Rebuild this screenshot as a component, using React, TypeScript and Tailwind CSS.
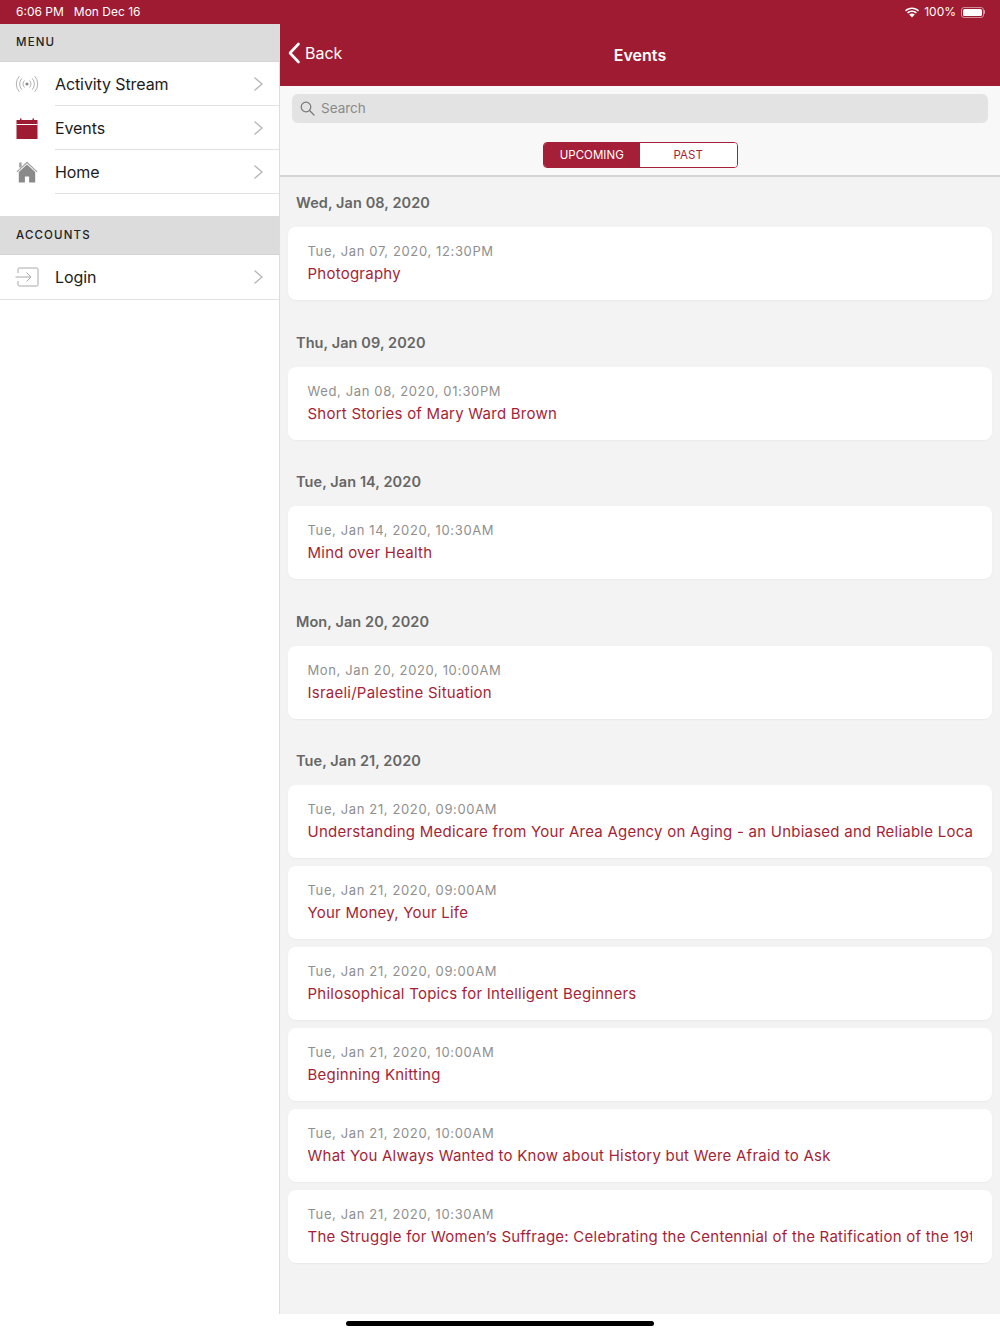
const font = "font-['Inter','Liberation_Sans',sans-serif]";

interface EventItem {
  time: string;
  title: string;
}

interface EventGroup {
  day: string;
  items: EventItem[];
}

const groups: EventGroup[] = [
  { day: 'Wed, Jan 08, 2020', items: [{ time: 'Tue, Jan 07, 2020, 12:30PM', title: 'Photography' }] },
  { day: 'Thu, Jan 09, 2020', items: [{ time: 'Wed, Jan 08, 2020, 01:30PM', title: 'Short Stories of Mary Ward Brown' }] },
  { day: 'Tue, Jan 14, 2020', items: [{ time: 'Tue, Jan 14, 2020, 10:30AM', title: 'Mind over Health' }] },
  { day: 'Mon, Jan 20, 2020', items: [{ time: 'Mon, Jan 20, 2020, 10:00AM', title: 'Israeli/Palestine Situation' }] },
  {
    day: 'Tue, Jan 21, 2020',
    items: [
      { time: 'Tue, Jan 21, 2020, 09:00AM', title: 'Understanding Medicare from Your Area Agency on Aging - an Unbiased and Reliable Local Resource' },
      { time: 'Tue, Jan 21, 2020, 09:00AM', title: 'Your Money, Your Life' },
      { time: 'Tue, Jan 21, 2020, 09:00AM', title: 'Philosophical Topics for Intelligent Beginners' },
      { time: 'Tue, Jan 21, 2020, 10:00AM', title: 'Beginning Knitting' },
      { time: 'Tue, Jan 21, 2020, 10:00AM', title: 'What You Always Wanted to Know about History but Were Afraid to Ask' },
      { time: 'Tue, Jan 21, 2020, 10:30AM', title: 'The Struggle for Women\u2019s Suffrage: Celebrating the Centennial of the Ratification of the 19th Amendment' },
    ],
  },
];

function StreamIcon() {
  return (
    <svg width="24" height="18" viewBox="0 0 24 18" fill="none" stroke="#a8a8a8" strokeWidth="0.9" strokeLinecap="round">
      <circle cx="12" cy="9" r="1.6" fill="#8c8c8c" stroke="none" />
      <path d="M9.2 5.8a4.6 4.6 0 0 0 0 6.4M14.8 5.8a4.6 4.6 0 0 1 0 6.4" />
      <path d="M6.6 3.6a8 8 0 0 0 0 10.8M17.4 3.6a8 8 0 0 1 0 10.8" />
      <path d="M4 1.5a11.4 11.4 0 0 0 0 15M20 1.5a11.4 11.4 0 0 1 0 15" />
    </svg>
  );
}

function CalendarIcon() {
  return (
    <svg width="22" height="21" viewBox="0 0 22 21">
      <rect x="0.5" y="2" width="21" height="19" fill="#9e1b32" />
      <rect x="0.5" y="6" width="21" height="1" fill="#ffffff" />
      <rect x="4" y="0.5" width="1.5" height="3.5" fill="#9e1b32" />
      <rect x="16.5" y="0.5" width="1.5" height="3.5" fill="#9e1b32" />
    </svg>
  );
}

function HomeIcon() {
  return (
    <svg width="22" height="22" viewBox="0 0 22 22">
      <path d="M11 0.5 0.5 10.5l0.8 0.8L11 2.2l9.7 9.1 0.8-0.8z" fill="#a0a0a0" />
      <path d="M11 3.4 2.8 11v10.5h6.1v-6h4.2v6h6.1V11z" fill="#8a8a8a" />
      <rect x="3.2" y="1.5" width="2.4" height="5" fill="#a0a0a0" />
    </svg>
  );
}

function LoginIcon() {
  return (
    <svg width="24" height="20" viewBox="0 0 24 20" fill="none" stroke="#a8a8a8" strokeWidth="1">
      <path d="M3 6V2.200C3 1.500 3.500 1 4.200 1h17.600c.7 0 1.200.5 1.200 1.200v15.600c0 .7-.5 1.200-1.200 1.200H4.200C3.500 19 3 18.500 3 17.800V14" />
      <path d="M0.500 10h15M11.500 5.500l4.500 4.500-4.500 4.500" />
    </svg>
  );
}

function Chevron() {
  return (
    <svg width="9" height="14" viewBox="0 0 9 14" fill="none" stroke="#b8b8b8" strokeWidth="1.500" strokeLinecap="round" strokeLinejoin="round">
      <path d="M1 1l7 6-7 6" />
    </svg>
  );
}

function MenuHeader({ label, className }: { label: string; className: string }) {
  return (
    <div className={`flex items-center border-b border-[#d4d4d4] bg-[#dcdcdc] pl-4 pt-[1px] text-[11.5px] font-medium tracking-[1.15px] text-[#222222] ${className}`}>
      {label}
    </div>
  );
}

function MenuRow({ icon, label }: { icon: React.ReactNode; label: string }) {
  return (
    <div className="flex h-11 items-stretch bg-white">
      <div className="flex w-[55px] items-center justify-center pr-[1px]">{icon}</div>
      <div className="flex flex-1 items-center justify-between border-b border-[#e2e2e2] pr-[16px] pt-[1px] text-[16px] tracking-[-0.1px] text-[#1c1c1c]">
        <span>{label}</span>
        <Chevron />
      </div>
    </div>
  );
}

function EventCard({ item }: { item: EventItem }) {
  return (
    <div className="h-[73px] rounded-lg bg-white pl-[19.5px] pr-[20px] pt-[14px] shadow-[0_1px_2px_rgba(0,0,0,0.04)]">
      <div className="text-[13px] leading-5 tracking-[0.63px] text-[#8f8f8f]">{item.time}</div>
      <div className="mt-[1px] overflow-hidden whitespace-nowrap text-[15px] leading-6 tracking-[0.24px] text-[#a51f38]">{item.title}</div>
    </div>
  );
}

export default function App() {
  return (
    <div className={`flex h-[1334px] w-[1000px] flex-col overflow-hidden bg-white ${font}`}>
      <div className="flex h-6 shrink-0 items-center justify-between bg-[#9e1b32] pl-4 pr-[15px] text-[12px] text-white">
        <div className="flex gap-[10px]">
          <span>6:06 PM</span>
          <span>Mon Dec 16</span>
        </div>
        <div className="flex items-center gap-[5px]">
          <svg width="14" height="11" viewBox="0 0 14 11" fill="#ffffff">
            <path d="M7 2C9.300 2 11.400 2.900 13 4.400l1-1.100C12.100 1.500 9.700.5 7 .5S1.900 1.500 0 3.300l1 1.100C2.600 2.900 4.700 2 7 2z" />
            <path d="M7 5c1.500 0 2.900.6 3.900 1.500l1-1.100C10.600 4.200 8.900 3.500 7 3.500S3.400 4.200 2.100 5.400l1 1.100C4.100 5.600 5.500 5 7 5z" />
            <path d="M7 6.500c-1.100 0-2.100.4-2.800 1.100L7 10.500l2.800-2.900C9.100 6.900 8.100 6.500 7 6.500z" />
          </svg>
          <span>100%</span>
          <div className="flex items-center">
            <div className="h-[11px] w-[23px] rounded-[3px] border border-white/50 p-[1px]">
              <div className="h-full w-full rounded-[1.5px] bg-white" />
            </div>
            <div className="h-1 w-[1px] rounded-r bg-white/60" />
          </div>
        </div>
      </div>

      <div className="flex h-[1290px] shrink-0">
        <aside className="w-[280px] shrink-0 border-r border-[#dddddd] bg-white">
          <MenuHeader label="MENU" className="h-[38px]" />
          <MenuRow icon={<StreamIcon />} label="Activity Stream" />
          <MenuRow icon={<CalendarIcon />} label="Events" />
          <MenuRow icon={<HomeIcon />} label="Home" />
          <MenuHeader label="ACCOUNTS" className="mt-[22px] h-[39px]" />
          <div className="flex h-[45px] items-stretch border-b border-[#e2e2e2] bg-white">
            <div className="flex w-[55px] items-center justify-center pr-[1px]"><LoginIcon /></div>
            <div className="flex flex-1 items-center justify-between pr-[16px] text-[16px] tracking-[-0.1px] text-[#1c1c1c]">
              <span>Login</span>
              <Chevron />
            </div>
          </div>
        </aside>

        <main className="flex min-w-0 flex-1 flex-col overflow-hidden bg-[#f3f3f3]">
          <header className="relative flex h-[62px] shrink-0 items-center bg-[#9e1b32] text-white">
            <div className="flex items-center pb-[5px] pl-[7px]">
              <svg width="14" height="22" viewBox="0 0 14 22" fill="none" stroke="#ffffff" strokeWidth="2.600" strokeLinecap="round" strokeLinejoin="round">
                <path d="M11.500 2 3 11l8.500 9" />
              </svg>
              <span className="ml-[4px] text-[16px]">Back</span>
            </div>
            <div className="absolute inset-x-0 top-[19px] text-center text-[16px] leading-6 font-semibold">Events</div>
          </header>

          <div className="h-[91px] shrink-0 border-b-2 border-[#d4d4d4] bg-[#f8f8f8] px-3 pt-2">
            <div className="flex h-[29px] items-center rounded-md bg-[#e3e3e3] pl-2 text-[13.5px] text-[#8a8a8a]">
              <svg width="15" height="15" viewBox="0 0 15 15" fill="none" stroke="#777777" strokeWidth="1.200" strokeLinecap="round">
                <circle cx="6" cy="6" r="4.800" />
                <path d="M9.500 9.500l4.500 4.500" />
              </svg>
              <span className="ml-[6px]">Search</span>
            </div>
            <div className="mt-[19px] flex justify-center">
              <div className="flex h-[26px] w-[195px] overflow-hidden rounded-[4px] border border-[#a51f38] text-[11.5px] tracking-[0.05px]">
                <div className="flex flex-1 items-center justify-center bg-[#a51f38] pt-[1px] text-white">UPCOMING</div>
                <div className="flex flex-1 items-center justify-center bg-white pt-[1px] text-[#a51f38]">PAST</div>
              </div>
            </div>
          </div>

          <div className="px-2">
            {groups.map(group => (
              <section key={group.day} className="pb-[16.5px]">
                <h2 className="flex h-[50px] items-center pt-[2px] pl-2 text-[14.5px] font-semibold tracking-[0.08px] text-[#666666]">{group.day}</h2>
                <div className="flex flex-col gap-2">
                  {group.items.map(item => (
                    <EventCard key={item.title} item={item} />
                  ))}
                </div>
              </section>
            ))}
          </div>
        </main>
      </div>

      <div className="flex flex-1 items-start justify-center bg-white pt-[7px]">
        <div className="h-[5px] w-[308px] rounded-full bg-black" />
      </div>
    </div>
  );
}
